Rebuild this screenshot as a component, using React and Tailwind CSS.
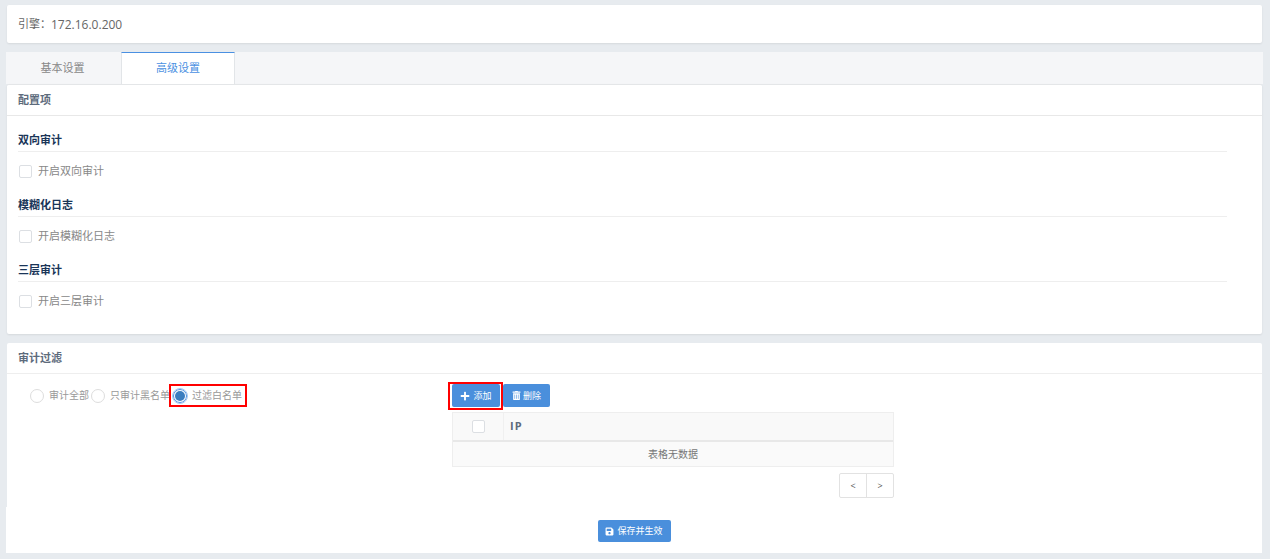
import { FaPlus, FaTrashAlt, FaSave } from 'react-icons/fa';

const Checkbox = ({ className = '' }) => (
    <span className={`block w-[13px] h-[13px] bg-white border border-[#dcdfe3] rounded-[2px] ${className}`}></span>
);

const AuditOption = ({ title, label }) => (
    <div>
        <h3 className="text-[11px] leading-[18px] pt-[1px] pb-[2px] font-bold text-[#1a3558] border-b border-[#eeeeee] mr-[24px]">{title}</h3>
        <label className="flex items-center gap-[6px] h-[18px] mt-[10px] text-[11px] text-[#888888]">
            <Checkbox className="ml-[1px]" />
            {label}
        </label>
    </div>
);

const Radio = ({ label, checked }) => (
    <label className="flex items-center gap-[5px] text-[10px] text-[#999999]">
        {checked ? (
            <span className="flex items-center justify-center w-[14px] h-[14px] rounded-full bg-white border border-[#4a8fdf] outline outline-1 outline-[#a9c8f0]">
                <span className="block w-[10px] h-[10px] rounded-full bg-[#3b7dbf]"></span>
            </span>
        ) : (
            <span className="block w-[14px] h-[14px] rounded-full bg-white border border-[#dddddd]"></span>
        )}
        {label}
    </label>
);

export default function App() {
    return (
        <div className="w-[1270px] h-[559px] overflow-hidden bg-[#e7ebef] px-[6px] pt-[5px] font-['Open_Sans','Noto_Sans_CJK_SC',sans-serif] text-[#666666]">
            <div className="h-[38px] w-[1255px] ml-[1px] pt-[1px] flex items-center px-[11px] bg-white rounded-[2px] shadow-[0_1px_2px_rgba(0,0,0,0.08)] text-[11px]">
                引擎：<span className="text-[12px]">172.16.0.200</span>
            </div>

            <div className="flex mt-[9px] h-[32px] w-[1257px] bg-[#f5f6f8]">
                <div className="w-[115px] pr-[2px] flex items-center justify-center text-[11px] text-[#888888]">基本设置</div>
                <div className="w-[114px] flex items-center justify-center bg-white border-t border-x border-t-[#4a90e2] border-x-[#e2e5e8] text-[11px] text-[#4a90e2]">高级设置</div>
            </div>

            <div className="w-[1255px] ml-[1px] h-[250px] bg-white rounded-[2px] border-t border-[#e4e6e8] shadow-[0_1px_2px_rgba(0,0,0,0.08)]">
                <div className="h-[31px] flex items-center px-[11px] border-b border-[#e8e8e8] text-[11px] font-bold text-[#5d6b7c]">配置项</div>
                <div className="flex flex-col gap-[15px] px-[11px] pt-[14px]">
                    <AuditOption title="双向审计" label="开启双向审计" />
                    <AuditOption title="模糊化日志" label="开启模糊化日志" />
                    <AuditOption title="三层审计" label="开启三层审计" />
                </div>
            </div>

            <div className="w-[1255px] ml-[1px] h-[210px] mt-[9px] bg-white rounded-[2px]">
                <div className="h-[31px] flex items-center px-[11px] border-b border-[#eeeeee] text-[11px] font-bold text-[#5d6b7c]">审计过滤</div>
                <div className="flex">
                    <div className="w-[445px] pl-[23px] pt-[14px] flex items-start gap-[2px]">
                        <Radio label="审计全部" />
                        <Radio label="只审计黑名单" />
                        <div className="relative ml-[1px]">
                            <Radio label="过滤白名单" checked />
                            <span className="absolute -left-[4px] -top-[4px] w-[78px] h-[23px] border-2 border-[#ff0000]"></span>
                        </div>
                    </div>
                    <div className="w-[442px] pt-[10px]">
                        <div className="flex gap-[3px]">
                            <div className="relative">
                                <button className="flex items-center gap-[3px] h-[23px] w-[48px] justify-center bg-[#4a8fdc] rounded-[2px] text-[9px] text-white">
                                    <FaPlus size={10} />
                                    添加
                                </button>
                                <span className="absolute -left-[4px] -top-[2px] w-[55px] h-[28px] border-2 border-[#ff0000]"></span>
                            </div>
                            <button className="flex items-center gap-[2px] h-[23px] w-[47px] justify-center bg-[#4a8fdc] rounded-[2px] text-[9px] text-white">
                                <FaTrashAlt size={9} />
                                删除
                            </button>
                        </div>
                        <div className="mt-[5px] border border-[#eeeeee]">
                            <div className="flex h-[29px] bg-[#f9f9f9] border-b-2 border-[#e8e8e8]">
                                <div className="w-[51px] flex items-center justify-center border-r border-[#f0f0f0]">
                                    <Checkbox />
                                </div>
                                <div className="flex items-center pl-[6px] text-[11px] font-bold tracking-[1px] text-[#5d6b7c]">IP</div>
                            </div>
                            <div className="h-[24px] flex items-center justify-center bg-[#fafafa] text-[10px] text-[#777777]">表格无数据</div>
                        </div>
                        <div className="flex justify-end mt-[6px]">
                            <div className="flex h-[25px] border border-[#e2e2e2] rounded-[2px] text-[9px] text-[#555555]">
                                <span className="w-[27px] flex items-center justify-center border-r border-[#e2e2e2]">&lt;</span>
                                <span className="w-[26px] flex items-center justify-center">&gt;</span>
                            </div>
                        </div>
                    </div>
                </div>
            </div>
            <div className="w-[1256px] h-[46px] -mt-[46px] pt-[2px] relative flex items-center justify-center bg-white">
                <button className="flex items-center gap-[3px] h-[22px] w-[73px] justify-center bg-[#4a8fdc] rounded-[2px] text-[9px] text-white">
                    <FaSave size={9} />
                    保存并生效
                </button>
            </div>
        </div>
    );
}
